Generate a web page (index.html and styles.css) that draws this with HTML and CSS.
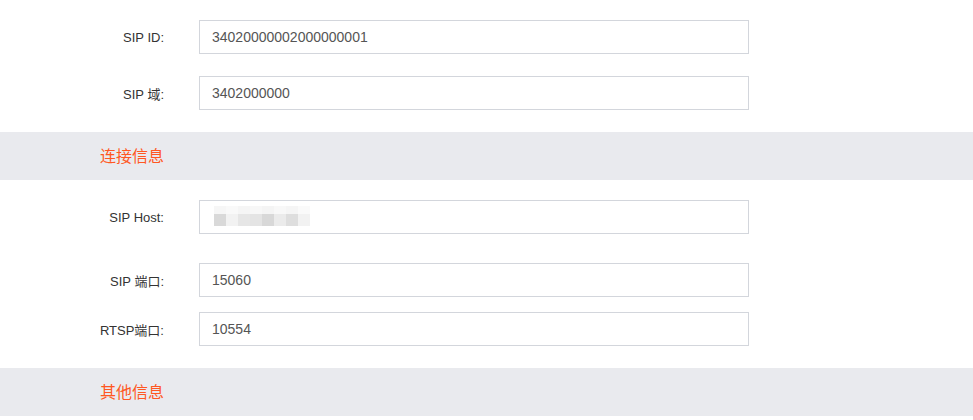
FILE: index.html
```html
<!DOCTYPE html>
<html lang="zh">
<head>
<meta charset="utf-8">
<title>设备配置</title>
<link rel="stylesheet" href="styles.css">
</head>
<body>
<div class="page">
  <section class="group group-first">
    <div class="row">
      <label class="label">SIP ID:</label>
      <div class="field">34020000002000000001</div>
    </div>
    <div class="row row-gap22">
      <label class="label">SIP 域:</label>
      <div class="field">3402000000</div>
    </div>
  </section>
  <div class="band"><span class="band-title">连接信息</span></div>
  <section class="group">
    <div class="row">
      <label class="label">SIP Host:</label>
      <div class="field">
        <div class="blur">
          <div class="blur-row top">
            <i style="background:#f6f6f6"></i><i style="background:#f9f9f9"></i><i style="background:#f5f5f5"></i><i style="background:#f7f7f7"></i><i style="background:#f4f4f4"></i><i style="background:#f8f8f8"></i><i style="background:#f5f5f5"></i><i style="background:#fafafa"></i>
          </div>
          <div class="blur-row">
            <i style="background:#d9d9d9"></i><i style="background:#f2f2f2"></i><i style="background:#e6e6e6"></i><i style="background:#e4e4e4"></i><i style="background:#d8d8d8"></i><i style="background:#ebebeb"></i><i style="background:#dedede"></i><i style="background:#f2f2f2"></i>
          </div>
        </div>
      </div>
    </div>
    <div class="row row-gap29">
      <label class="label">SIP 端口:</label>
      <div class="field">15060</div>
    </div>
    <div class="row row-gap15">
      <label class="label">RTSP端口:</label>
      <div class="field">10554</div>
    </div>
  </section>
  <div class="band"><span class="band-title">其他信息</span></div>
</div>
</body>
</html>
```
FILE: styles.css
```css
html, body {
  margin: 0;
  padding: 0;
  background: #ffffff;
}
body {
  font-family: "Liberation Sans", Arial, "Noto Sans CJK SC", sans-serif;
  color: #333333;
}
.page {
  width: 973px;
}
.group {
  padding: 20px 0 22px 0;
}
.row {
  display: flex;
  align-items: center;
  gap: 35px;
}
.row-gap22 { margin-top: 22px; }
.row-gap29 { margin-top: 29px; }
.row-gap15 { margin-top: 15px; }
.label {
  width: 164px;
  text-align: right;
  font-size: 13px;
  color: #333333;
  font-family: "Liberation Sans", Arial, "Noto Sans CJK SC", sans-serif;
}
.field {
  box-sizing: border-box;
  width: 550px;
  height: 34px;
  border: 1px solid #d3d6dc;
  padding: 0 12px;
  display: flex;
  align-items: center;
  font-size: 14px;
  color: #555555;
}
.band {
  height: 48px;
  background: #e9eaee;
  display: flex;
  align-items: center;
  padding-left: 100px;
}
.band-title {
  font-family: "Noto Sans CJK SC", sans-serif;
  font-size: 16px;
  color: #ff5722;
  line-height: 1;
  margin-top: -3px;
}
.blur {
  display: flex;
  flex-direction: column;
  margin-left: 2px;
  margin-top: -3px;
}
.blur-row {
  display: flex;
  height: 12px;
}
.blur-row.top {
  height: 8px;
}
.blur-row i {
  display: block;
  width: 12px;
  height: 100%;
}
```
